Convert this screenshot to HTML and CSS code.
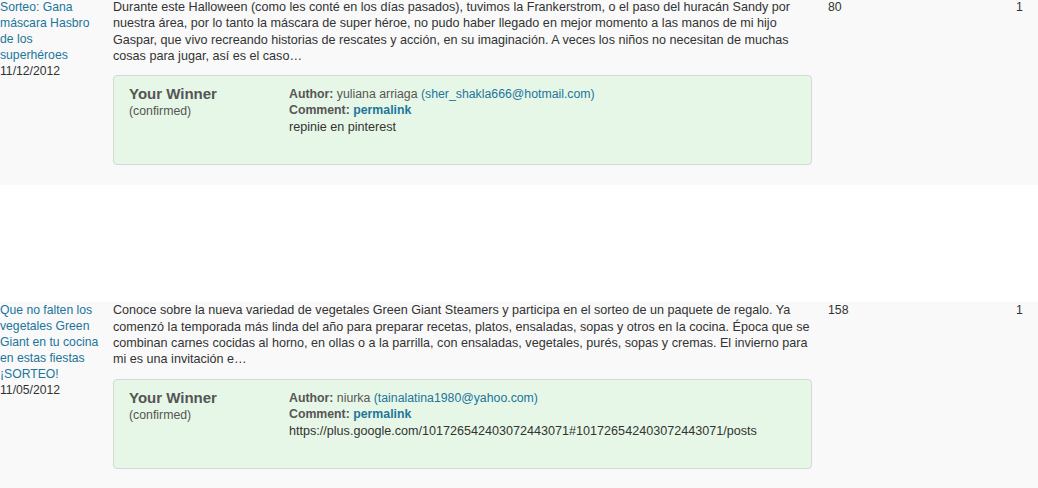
FILE: index.html
```html
<!DOCTYPE html>
<html>
<head>
<meta charset="utf-8">
<link rel="stylesheet" href="styles.css">
</head>
<body>
<div class="table">
  <div class="row first">
    <div class="col-title"><a class="link" href="#">Sorteo: Gana máscara Hasbro de los superhéroes</a><br>11/12/2012</div>
    <div class="col-main">
      <div class="desc">Durante este Halloween (como les conté en los días pasados), tuvimos la Frankerstrom, o el paso del huracán Sandy por nuestra área, por lo tanto la máscara de super héroe, no pudo haber llegado en mejor momento a las manos de mi hijo Gaspar, que vivo recreando historias de rescates y acción, en su imaginación. A veces los niños no necesitan de muchas cosas para jugar, así es el caso…</div>
      <div class="winner">
        <div class="w-left"><div class="w-title">Your Winner</div><div class="w-sub">(confirmed)</div></div>
        <div class="w-right">
          <div><b>Author:</b> yuliana arriaga <a class="link" href="#">(sher_shakla666@hotmail.com)</a></div>
          <div><b>Comment:</b> <a class="link bold" href="#">permalink</a></div>
          <p class="comment">repinie en pinterest</p>
        </div>
      </div>
    </div>
    <div class="col-num">80</div>
    <div class="col-count">1</div>
  </div>
  <div class="spacer"></div>
  <div class="row">
    <div class="col-title"><a class="link" href="#">Que no falten los vegetales Green Giant en tu cocina en estas fiestas ¡SORTEO!</a><br>11/05/2012</div>
    <div class="col-main">
      <div class="desc">Conoce sobre la nueva variedad de vegetales Green Giant Steamers y participa en el sorteo de un paquete de regalo. Ya comenzó la temporada más linda del año para preparar recetas, platos, ensaladas, sopas y otros en la cocina. Época que se combinan carnes cocidas al horno, en ollas o a la parrilla, con ensaladas, vegetales, purés, sopas y cremas. El invierno para mi es una invitación e…</div>
      <div class="winner">
        <div class="w-left"><div class="w-title">Your Winner</div><div class="w-sub">(confirmed)</div></div>
        <div class="w-right">
          <div><b>Author:</b> niurka <a class="link" href="#">(tainalatina1980@yahoo.com)</a></div>
          <div><b>Comment:</b> <a class="link bold" href="#">permalink</a></div>
          <p class="comment">https://plus.google.com/101726542403072443071#101726542403072443071/posts</p>
        </div>
      </div>
    </div>
    <div class="col-num">158</div>
    <div class="col-count">1</div>
  </div>
</div>
</body>
</html>
```

FILE: styles.css
```css
html, body {
  margin: 0;
  padding: 0;
  background: #fff;
}
body {
  font-family: "Liberation Sans", Arial, sans-serif;
  font-size: 12px;
  line-height: 16px;
  color: #333;
  overflow: hidden;
}
.table {
  width: 1038px;
}
.row {
  display: grid;
  grid-template-columns: 113px 715px 188px 22px;
  background: #f9f9f9;
  padding-bottom: 20px;
}
.row.first {
  margin-top: -1px;
}
.spacer {
  height: 117px;
  background: #fff;
}
.col-title {
  padding-right: 11px;
  font-size: 12.2px;
}
.link {
  color: #21759b;
  text-decoration: none;
}
.bold {
  font-weight: bold;
}
.col-main {
  padding-right: 16px;
}
.col-num,
.col-count {
  font-size: 12.3px;
}
.desc {
  font-size: 12.6px;
  line-height: 16.33px;
  margin-bottom: 11px;
}
.winner {
  box-sizing: border-box;
  height: 90px;
  background: #e7f7e7;
  border: 1px solid #d5d8d5;
  border-radius: 4px;
  padding: 9px 15px;
  display: flex;
  color: #555;
}
.w-left {
  width: 160px;
  flex: none;
}
.w-title {
  font-size: 15px;
  font-weight: bold;
  line-height: 18px;
}
.w-sub {
  font-size: 12.3px;
  line-height: 16px;
}
.w-right {
  font-size: 12.3px;
  padding-top: 1px;
}
.w-right b {
  color: #555;
}
.comment {
  font-size: 12.6px;
  margin: 1px 0 0;
  color: #333;
}
```
